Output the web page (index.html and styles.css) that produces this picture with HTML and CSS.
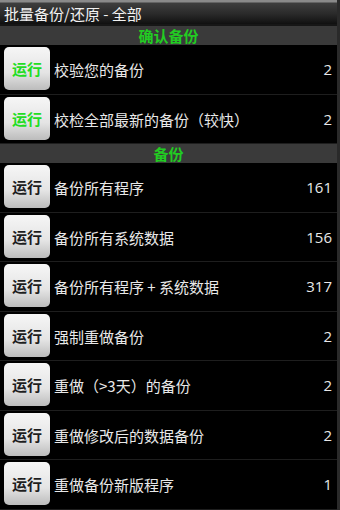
FILE: index.html
```html
<!DOCTYPE html>
<html lang="zh-CN">
<head>
  <meta charset="UTF-8" />
  <meta name="viewport" content="width=device-width, initial-scale=1.0" />
  <title>批量备份/还原</title>
  <link rel="stylesheet" href="styles.css">
</head>
<body>
  <div class="screen">
    <div class="title-bar">批量备份/还原 - 全部</div>

    <div class="section">确认备份</div>
    <div class="row">
      <button class="run green">运行</button>
      <span class="label">校验您的备份</span>
      <span class="count">2</span>
    </div>
    <div class="row">
      <button class="run green">运行</button>
      <span class="label">校检全部最新的备份（较快）</span>
      <span class="count">2</span>
    </div>

    <div class="section">备份</div>
    <div class="row">
      <button class="run">运行</button>
      <span class="label">备份所有程序</span>
      <span class="count">161</span>
    </div>
    <div class="row">
      <button class="run">运行</button>
      <span class="label">备份所有系统数据</span>
      <span class="count">156</span>
    </div>
    <div class="row">
      <button class="run">运行</button>
      <span class="label">备份所有程序 + 系统数据</span>
      <span class="count">317</span>
    </div>
    <div class="row">
      <button class="run">运行</button>
      <span class="label">强制重做备份</span>
      <span class="count">2</span>
    </div>
    <div class="row">
      <button class="run">运行</button>
      <span class="label">重做（&gt;3天）的备份</span>
      <span class="count">2</span>
    </div>
    <div class="row">
      <button class="run">运行</button>
      <span class="label">重做修改后的数据备份</span>
      <span class="count">2</span>
    </div>
    <div class="row">
      <button class="run">运行</button>
      <span class="label">重做备份新版程序</span>
      <span class="count">1</span>
    </div>
  </div>
</body>
</html>
```

FILE: styles.css
```css
html, body {
  margin: 0;
  padding: 0;
  background: #000;
}
body {
  font-family: "Noto Sans CJK SC", "DejaVu Sans", sans-serif;
  color: #e8e8e8;
}
.screen {
  width: 340px;
  height: 510px;
  overflow: hidden;
  border-right: 3px solid #2a2a2a;
  box-sizing: border-box;
}
.title-bar {
  height: 24px;
  padding-left: 4px;
  font-size: 15px;
  line-height: 27px;
  color: #f2f2f2;
  background: linear-gradient(#8a8a8a 0, #8a8a8a 2px, #3e3e3e 3px, #2a2a2a 14px, #101010 24px);
  border-bottom: 2px solid #161616;
}
.section {
  height: 19px;
  line-height: 20px;
  text-align: center;
  font-size: 15px;
  font-weight: bold;
  color: #22cc22;
  background: #3a3a3a;
}
.row {
  display: flex;
  align-items: flex-start;
  height: 48.5px;
  padding-left: 4px;
  padding-right: 5px;
  border-bottom: 1px solid #1e1e1e;
  box-sizing: content-box;
}
.run {
  width: 46px;
  height: 43px;
  margin-top: 2px;
  padding: 0;
  border: none;
  border-radius: 5px;
  font-family: inherit;
  font-size: 15px;
  font-weight: bold;
  color: #1e1e1e;
  background: linear-gradient(#f6f6f6, #e4e4e4 60%, #bcbcbc);
}
.run.green {
  color: #22dd22;
}
.label {
  flex: 1;
  margin-left: 4px;
  font-size: 15px;
  line-height: 49px;
}
.count {
  font-size: 15px;
  line-height: 49px;
  font-family: "Open Sans", sans-serif;
}
```
